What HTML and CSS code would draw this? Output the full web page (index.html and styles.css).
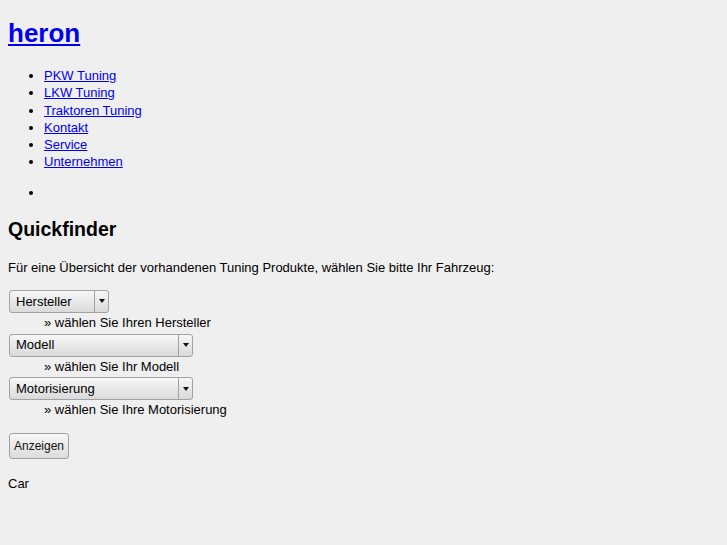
FILE: index.html
```html
<!DOCTYPE html>
<html lang="de">
<head>
<meta charset="utf-8">
<title>heron</title>
<link rel="stylesheet" href="styles.css">
</head>
<body>
<h1 class="site-title"><a href="#">heron</a></h1>
<ul class="nav">
  <li><a href="#">PKW Tuning</a></li>
  <li><a href="#">LKW Tuning</a></li>
  <li><a href="#">Traktoren Tuning</a></li>
  <li><a href="#">Kontakt</a></li>
  <li><a href="#">Service</a></li>
  <li><a href="#">Unternehmen</a></li>
</ul>
<ul class="extra">
  <li></li>
</ul>
<h2 class="section-title">Quickfinder</h2>
<p class="intro">Für eine Übersicht der vorhandenen Tuning Produkte, wählen Sie bitte Ihr Fahrzeug:</p>
<form class="quickfinder">
  <div class="field">
    <div class="dropdown dropdown-sm">
      <select><option>Hersteller</option></select>
      <span class="arrow"></span>
    </div>
    <div class="hint">» wählen Sie Ihren Hersteller</div>
  </div>
  <div class="field">
    <div class="dropdown dropdown-lg">
      <select><option>Modell</option></select>
      <span class="arrow"></span>
    </div>
    <div class="hint">» wählen Sie Ihr Modell</div>
  </div>
  <div class="field">
    <div class="dropdown dropdown-lg">
      <select><option>Motorisierung</option></select>
      <span class="arrow"></span>
    </div>
    <div class="hint">» wählen Sie Ihre Motorisierung</div>
  </div>
  <div class="actions">
    <button type="button" class="btn">Anzeigen</button>
  </div>
</form>
<p class="footer-note">Car</p>
</body>
</html>
```
FILE: styles.css
```css
html {
  background: #efefef;
}
body {
  margin: 0 8px 8px;
  padding-top: 15.5px;
  background: #efefef;
  color: #000;
  font-family: "Liberation Sans", Arial, sans-serif;
  font-size: 13px;
  line-height: 1.33;
}
a {
  color: #0000ee;
}
.site-title {
  font-size: 26px;
  margin: 0 0 17px;
}
.nav,
.extra {
  margin: 13px 0;
  padding-left: 36px;
}
.section-title {
  font-size: 19.5px;
  margin: 16px 0;
}
.intro {
  margin: 13px 0;
}
.quickfinder {
  display: flex;
  flex-direction: column;
  align-items: flex-start;
}
.field {
  display: flex;
  flex-direction: column;
  align-items: flex-start;
  margin-bottom: 2px;
}
.dropdown {
  display: inline-flex;
  box-sizing: border-box;
  height: 23px;
  margin: 0.5px 1px 1px;
  border: 1px solid #a2a2a2;
  border-radius: 3px;
  background: linear-gradient(#f7f7f7, #dadada);
}
.dropdown-sm {
  width: 100px;
}
.dropdown-lg {
  width: 184px;
}
.dropdown select {
  flex: 1;
  min-width: 0;
  appearance: none;
  -webkit-appearance: none;
  border: 0;
  background: transparent;
  color: #000;
  font: inherit;
  font-size: 13px;
  padding: 0 0 0 6px;
  margin: 0;
  outline: none;
}
.arrow {
  width: 13px;
  border-left: 1px solid #a2a2a2;
  display: flex;
  align-items: center;
  justify-content: center;
}
.arrow::after {
  content: "";
  width: 0;
  height: 0;
  border-left: 3.5px solid transparent;
  border-right: 3.5px solid transparent;
  border-top: 4px solid #111;
}
.hint {
  padding-left: 36px;
}
.actions {
  margin-top: 11px;
}
.btn {
  box-sizing: border-box;
  width: 60px;
  height: 26px;
  margin: 1px;
  padding: 0;
  border: 1px solid #a0a0a0;
  border-radius: 3px;
  background: linear-gradient(#f7f7f7, #dcdcdc);
  color: #111;
  font-family: inherit;
  font-size: 12px;
}
.footer-note {
  margin: 15px 0 13px;
}
```
